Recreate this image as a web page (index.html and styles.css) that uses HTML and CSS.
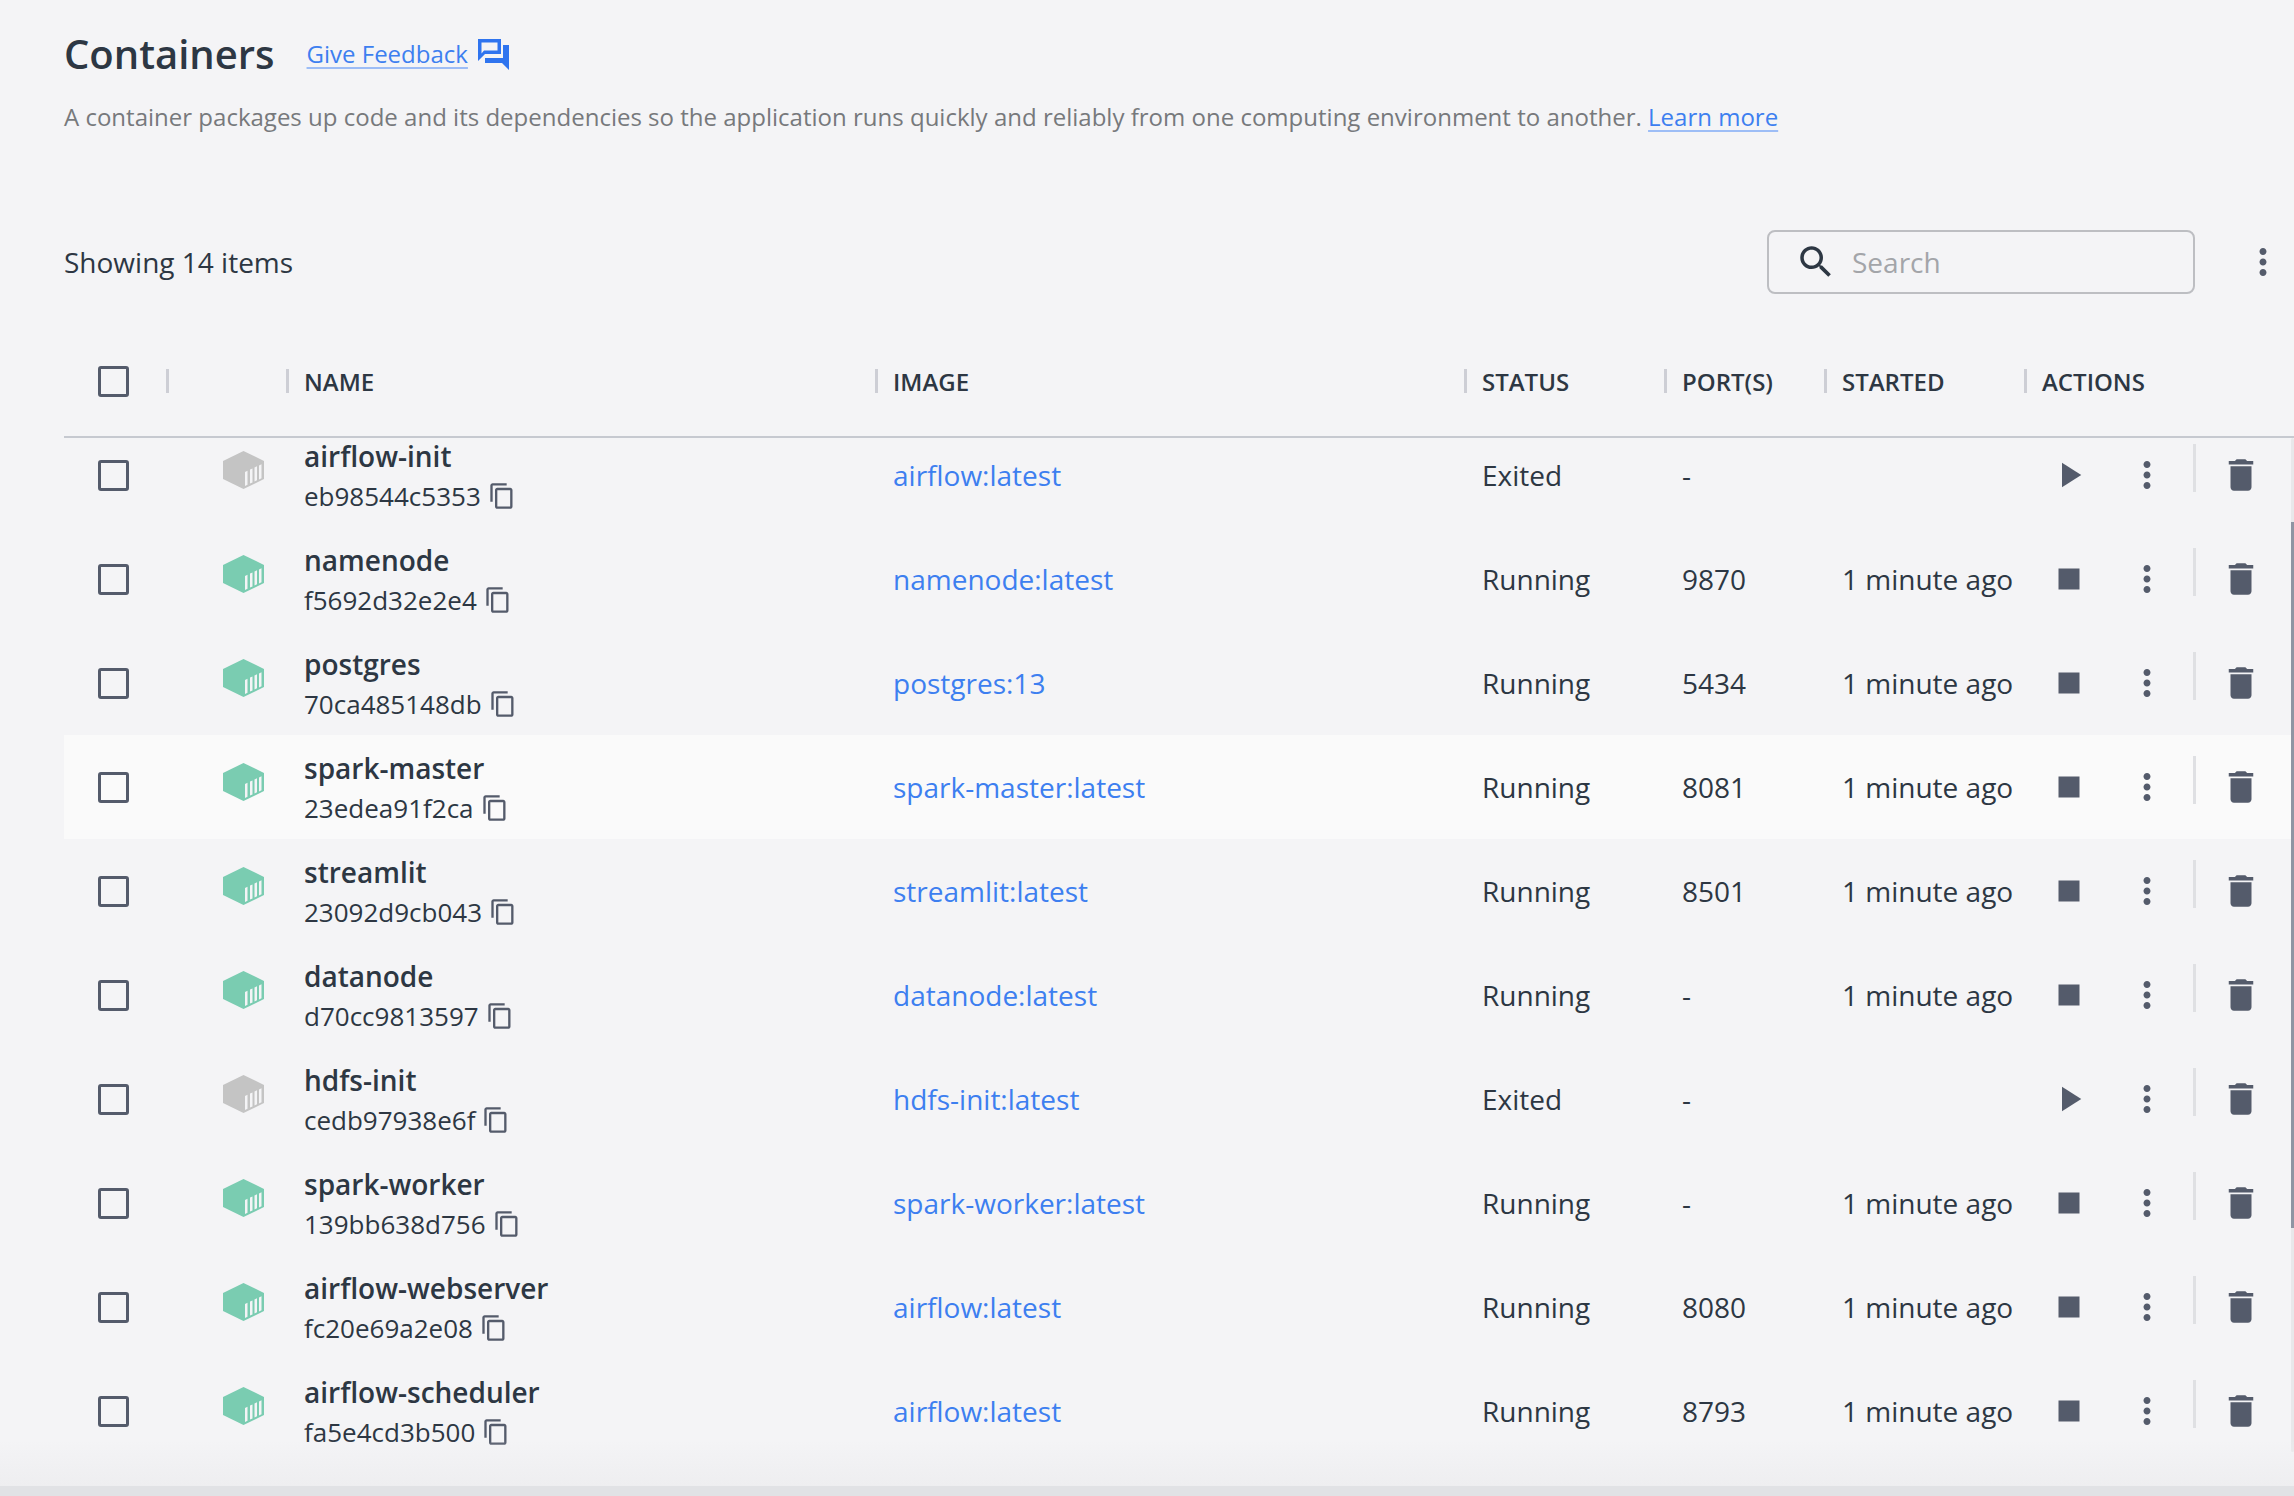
FILE: index.html
```html
<!DOCTYPE html>
<html lang="en">
<head>
    <meta charset="UTF-8">
    <meta name="viewport" content="width=device-width, initial-scale=1.0">
    <title>Containers</title>
    <link rel="stylesheet" href="styles.css">
</head>
<body>

<svg class="sprites" xmlns="http://www.w3.org/2000/svg">
    <symbol id="i-feedback" viewBox="0 0 31 31">
        <path d="M0 0h23v15H7l-7 7zM3.500 3.500v11L6 11.500h13.500v-8z" fill-rule="evenodd"/>
        <path d="M25 6h6v25l-7-7H7v-5h18z"/>
    </symbol>
    <symbol id="i-search" viewBox="0 0 24 24">
        <path d="M15.500 14h-.79l-.28-.27C15.410 12.590 16 11.110 16 9.500 16 5.910 13.090 3 9.500 3S3 5.910 3 9.500 5.910 16 9.500 16c1.610 0 3.090-.59 4.230-1.570l.27.28v.79l5 4.990L20.490 19l-4.990-5zm-6 0C7.010 14 5 11.990 5 9.500S7.010 5 9.500 5 14 7.010 14 9.500 11.990 14 9.500 14z"/>
    </symbol>
    <symbol id="i-more" viewBox="0 0 24 24">
        <path d="M12 8c1.100 0 2-.9 2-2s-.9-2-2-2-2 .9-2 2 .9 2 2 2zm0 2c-1.100 0-2 .9-2 2s.9 2 2 2 2-.9 2-2-.9-2-2-2zm0 6c-1.100 0-2 .9-2 2s.9 2 2 2 2-.9 2-2-.9-2-2-2z"/>
    </symbol>
    <symbol id="i-copy" viewBox="0 0 24 24">
        <path d="M16 1H4c-1.100 0-2 .9-2 2v14h2V3h12V1zm3 4H8c-1.100 0-2 .9-2 2v14c0 1.100.9 2 2 2h11c1.100 0 2-.9 2-2V7c0-1.100-.9-2-2-2zm0 16H8V7h11v14z"/>
    </symbol>
    <symbol id="i-play" viewBox="0 0 24 24"><path d="M8 5v14l11-7z"/></symbol>
    <symbol id="i-stop" viewBox="0 0 24 24"><path d="M6 6h12v12H6z"/></symbol>
    <symbol id="i-delete" viewBox="0 0 24 24">
        <path d="M6 19c0 1.100.9 2 2 2h8c1.100 0 2-.9 2-2V7H6v12zM19 4h-3.500l-1-1h-5l-1 1H5v2h14V4z"/>
    </symbol>
    <symbol id="i-box" viewBox="0 0 41 38">
        <path d="M20.500 0L41 10v18L20.500 38 0 28V10z"/>
        <path fill="#f4f4f6" d="M22 21l2.500-1.200v14L22 35zM27 18.600l2.500-1.200v14L27 32.600zM31.500 16.500l2.500-1.200v14l-2.500 1.200zM36 14.400l2.500-1.200v14L36 28.400z"/>
    </symbol>
</svg>

<div class="page">
    <div class="title-row">
        <h1>Containers</h1>
        <a class="link feedback" href="#">Give Feedback</a>
        <svg class="feedback-icon"><use href="#i-feedback"/></svg>
    </div>
    <p class="intro">A container packages up code and its dependencies so the application runs quickly and reliably from one computing environment to another. <a class="link" href="#">Learn more</a></p>

    <div class="toolbar">
        <span class="count">Showing 14 items</span>
        <div class="search">
            <svg class="search-icon"><use href="#i-search"/></svg>
            <span class="placeholder">Search</span>
        </div>
        <svg class="icon toolbar-more"><use href="#i-more"/></svg>
    </div>

    <div class="table">
        <div class="row head">
            <div class="cell"><span class="check"></span></div>
            <div class="cell sep"></div>
            <div class="cell sep">NAME</div>
            <div class="cell sep">IMAGE</div>
            <div class="cell sep">STATUS</div>
            <div class="cell sep">PORT(S)</div>
            <div class="cell sep">STARTED</div>
            <div class="cell sep">ACTIONS</div>
        </div>

        <div class="rows">
            <div class="row first">
                <div class="cell"><span class="check"></span></div>
                <div class="cell"><svg class="box exited"><use href="#i-box"/></svg></div>
                <div class="cell name"><b>airflow-init</b><span class="id">eb98544c5353<svg class="copy"><use href="#i-copy"/></svg></span></div>
                <div class="cell"><a class="image" href="#">airflow:latest</a></div>
                <div class="cell">Exited</div>
                <div class="cell">-</div>
                <div class="cell"></div>
                <div class="cell actions"><svg class="icon"><use href="#i-play"/></svg><svg class="icon more"><use href="#i-more"/></svg><span class="divider"></span><svg class="icon trash"><use href="#i-delete"/></svg></div>
            </div>
            <div class="row">
                <div class="cell"><span class="check"></span></div>
                <div class="cell"><svg class="box"><use href="#i-box"/></svg></div>
                <div class="cell name"><b>namenode</b><span class="id">f5692d32e2e4<svg class="copy"><use href="#i-copy"/></svg></span></div>
                <div class="cell"><a class="image" href="#">namenode:latest</a></div>
                <div class="cell">Running</div>
                <div class="cell">9870</div>
                <div class="cell">1 minute ago</div>
                <div class="cell actions"><svg class="icon"><use href="#i-stop"/></svg><svg class="icon more"><use href="#i-more"/></svg><span class="divider"></span><svg class="icon trash"><use href="#i-delete"/></svg></div>
            </div>
            <div class="row">
                <div class="cell"><span class="check"></span></div>
                <div class="cell"><svg class="box"><use href="#i-box"/></svg></div>
                <div class="cell name"><b>postgres</b><span class="id">70ca485148db<svg class="copy"><use href="#i-copy"/></svg></span></div>
                <div class="cell"><a class="image" href="#">postgres:13</a></div>
                <div class="cell">Running</div>
                <div class="cell">5434</div>
                <div class="cell">1 minute ago</div>
                <div class="cell actions"><svg class="icon"><use href="#i-stop"/></svg><svg class="icon more"><use href="#i-more"/></svg><span class="divider"></span><svg class="icon trash"><use href="#i-delete"/></svg></div>
            </div>
            <div class="row hovered">
                <div class="cell"><span class="check"></span></div>
                <div class="cell"><svg class="box"><use href="#i-box"/></svg></div>
                <div class="cell name"><b>spark-master</b><span class="id">23edea91f2ca<svg class="copy"><use href="#i-copy"/></svg></span></div>
                <div class="cell"><a class="image" href="#">spark-master:latest</a></div>
                <div class="cell">Running</div>
                <div class="cell">8081</div>
                <div class="cell">1 minute ago</div>
                <div class="cell actions"><svg class="icon"><use href="#i-stop"/></svg><svg class="icon more"><use href="#i-more"/></svg><span class="divider"></span><svg class="icon trash"><use href="#i-delete"/></svg></div>
            </div>
            <div class="row">
                <div class="cell"><span class="check"></span></div>
                <div class="cell"><svg class="box"><use href="#i-box"/></svg></div>
                <div class="cell name"><b>streamlit</b><span class="id">23092d9cb043<svg class="copy"><use href="#i-copy"/></svg></span></div>
                <div class="cell"><a class="image" href="#">streamlit:latest</a></div>
                <div class="cell">Running</div>
                <div class="cell">8501</div>
                <div class="cell">1 minute ago</div>
                <div class="cell actions"><svg class="icon"><use href="#i-stop"/></svg><svg class="icon more"><use href="#i-more"/></svg><span class="divider"></span><svg class="icon trash"><use href="#i-delete"/></svg></div>
            </div>
            <div class="row">
                <div class="cell"><span class="check"></span></div>
                <div class="cell"><svg class="box"><use href="#i-box"/></svg></div>
                <div class="cell name"><b>datanode</b><span class="id">d70cc9813597<svg class="copy"><use href="#i-copy"/></svg></span></div>
                <div class="cell"><a class="image" href="#">datanode:latest</a></div>
                <div class="cell">Running</div>
                <div class="cell">-</div>
                <div class="cell">1 minute ago</div>
                <div class="cell actions"><svg class="icon"><use href="#i-stop"/></svg><svg class="icon more"><use href="#i-more"/></svg><span class="divider"></span><svg class="icon trash"><use href="#i-delete"/></svg></div>
            </div>
            <div class="row">
                <div class="cell"><span class="check"></span></div>
                <div class="cell"><svg class="box exited"><use href="#i-box"/></svg></div>
                <div class="cell name"><b>hdfs-init</b><span class="id">cedb97938e6f<svg class="copy"><use href="#i-copy"/></svg></span></div>
                <div class="cell"><a class="image" href="#">hdfs-init:latest</a></div>
                <div class="cell">Exited</div>
                <div class="cell">-</div>
                <div class="cell"></div>
                <div class="cell actions"><svg class="icon"><use href="#i-play"/></svg><svg class="icon more"><use href="#i-more"/></svg><span class="divider"></span><svg class="icon trash"><use href="#i-delete"/></svg></div>
            </div>
            <div class="row">
                <div class="cell"><span class="check"></span></div>
                <div class="cell"><svg class="box"><use href="#i-box"/></svg></div>
                <div class="cell name"><b>spark-worker</b><span class="id">139bb638d756<svg class="copy"><use href="#i-copy"/></svg></span></div>
                <div class="cell"><a class="image" href="#">spark-worker:latest</a></div>
                <div class="cell">Running</div>
                <div class="cell">-</div>
                <div class="cell">1 minute ago</div>
                <div class="cell actions"><svg class="icon"><use href="#i-stop"/></svg><svg class="icon more"><use href="#i-more"/></svg><span class="divider"></span><svg class="icon trash"><use href="#i-delete"/></svg></div>
            </div>
            <div class="row">
                <div class="cell"><span class="check"></span></div>
                <div class="cell"><svg class="box"><use href="#i-box"/></svg></div>
                <div class="cell name"><b>airflow-webserver</b><span class="id">fc20e69a2e08<svg class="copy"><use href="#i-copy"/></svg></span></div>
                <div class="cell"><a class="image" href="#">airflow:latest</a></div>
                <div class="cell">Running</div>
                <div class="cell">8080</div>
                <div class="cell">1 minute ago</div>
                <div class="cell actions"><svg class="icon"><use href="#i-stop"/></svg><svg class="icon more"><use href="#i-more"/></svg><span class="divider"></span><svg class="icon trash"><use href="#i-delete"/></svg></div>
            </div>
            <div class="row">
                <div class="cell"><span class="check"></span></div>
                <div class="cell"><svg class="box"><use href="#i-box"/></svg></div>
                <div class="cell name"><b>airflow-scheduler</b><span class="id">fa5e4cd3b500<svg class="copy"><use href="#i-copy"/></svg></span></div>
                <div class="cell"><a class="image" href="#">airflow:latest</a></div>
                <div class="cell">Running</div>
                <div class="cell">8793</div>
                <div class="cell">1 minute ago</div>
                <div class="cell actions"><svg class="icon"><use href="#i-stop"/></svg><svg class="icon more"><use href="#i-more"/></svg><span class="divider"></span><svg class="icon trash"><use href="#i-delete"/></svg></div>
            </div>
            <div class="scroll-track"><div class="scroll-thumb"></div></div>
        </div>
    </div>
</div>
<div class="bottom-bar"></div>

</body>
</html>
```

FILE: styles.css
```css
* {
    box-sizing: border-box;
}
html, body {
    height: 100%;
}
body {
    margin: 0;
    display: flex;
    flex-direction: column;
    overflow: hidden;
    font-family: "Open Sans", Arial, sans-serif;
    font-size: 28px;
    color: #2d3743;
    background-color: #f4f4f6;
}
.sprites {
    display: none;
}
.page {
    flex: 1;
    min-height: 0;
    display: flex;
    flex-direction: column;
    padding: 30px 0 0 64px;
}
.title-row {
    display: flex;
    align-items: center;
    height: 48px;
}
h1 {
    margin: 0 32px 0 0;
    font-size: 40px;
    font-weight: 600;
    line-height: 48px;
}
.link {
    color: #3d7ff0;
    text-decoration: underline;
    text-decoration-color: #9dbdf6;
    text-underline-offset: 4px;
}
.feedback {
    margin-bottom: 2px;
    font-size: 24px;
}
.feedback-icon {
    width: 31px;
    height: 31px;
    margin-left: 10px;
    fill: #2f74ef;
}
.intro {
    margin: 23px 0 0;
    font-size: 24.03px;
    line-height: 32px;
    color: #77797c;
}
.toolbar {
    display: flex;
    align-items: center;
    height: 64px;
    margin-top: 97px;
    padding-right: 10px;
}
.count {
    flex: 1;
}
.search {
    display: flex;
    align-items: center;
    width: 428px;
    height: 64px;
    padding-left: 26px;
    border: 2px solid #bdbec2;
    border-radius: 8px;
}
.search-icon {
    width: 42px;
    height: 42px;
    fill: #2d3743;
}
.placeholder {
    margin-left: 15px;
    color: #a3a5a9;
}
.icon {
    flex-shrink: 0;
    width: 42px;
    height: 42px;
    fill: #545b6b;
}
.toolbar-more {
    margin-left: 47px;
}
.table {
    flex: 1;
    min-height: 0;
    display: flex;
    flex-direction: column;
    margin-top: 26px;
}
.row {
    display: grid;
    grid-template-columns: 102px 120px 589px 589px 200px 160px 200px 270px;
    height: 104px;
    flex-shrink: 0;
}
.cell {
    display: flex;
    align-items: center;
    min-width: 0;
    padding-left: 18px;
}
.row .cell:first-child {
    padding-left: 34px;
}
.row .cell:nth-child(2) {
    padding-left: 57px;
}
.head {
    height: 118px;
    padding-top: 6px;
    border-bottom: 2px solid #c6c9d0;
    font-size: 24px;
    font-weight: 600;
}
.sep {
    position: relative;
}
.sep::before {
    content: "";
    position: absolute;
    left: 0;
    top: 43px;
    width: 3px;
    height: 24px;
    background-color: #cdced5;
}
.check {
    display: block;
    width: 31px;
    height: 31px;
    border: 3px solid #545b6b;
    border-radius: 3px;
}
.rows {
    position: relative;
    flex: 1;
    min-height: 0;
}
.first {
    margin-top: -15px;
}
.hovered {
    background-color: #fafafa;
}
.box {
    flex-shrink: 0;
    width: 41px;
    height: 38px;
    margin-bottom: 11px;
    fill: #7accb1;
}
.box.exited {
    fill: #c4c4c4;
}
.name {
    flex-direction: column;
    align-items: flex-start;
    justify-content: center;
    padding-top: 2px;
}
.name b {
    font-weight: 600;
    line-height: 34px;
}
.id {
    display: flex;
    align-items: center;
    margin-top: 6px;
    font-size: 26px;
    line-height: 34px;
}
.copy {
    width: 28px;
    height: 28px;
    margin-left: 7px;
    fill: #545b6b;
}
.image {
    color: #3d7ff0;
    text-decoration: none;
}
.row .actions {
    padding-left: 24px;
}
.more {
    margin-left: 36px;
}
.divider {
    width: 3px;
    height: 48px;
    margin: 0 0 14px 25px;
    background-color: #dfe0e3;
}
.trash {
    margin-left: 24px;
}
.scroll-track {
    position: absolute;
    top: 0;
    right: 0;
    bottom: 34px;
    width: 3px;
    border-radius: 2px;
    background-color: #e8e8ea;
}
.scroll-thumb {
    position: absolute;
    top: 84px;
    left: 0;
    right: 0;
    height: 706px;
    background-color: #8f95a3;
}
.bottom-bar {
    position: relative;
    height: 10px;
    flex-shrink: 0;
    background-color: #e1e2e5;
}
.bottom-bar::before {
    content: "";
    position: absolute;
    left: 0;
    right: 0;
    bottom: 100%;
    height: 46px;
    background: linear-gradient(rgba(238, 238, 240, 0), #eeeef0);
}
```
